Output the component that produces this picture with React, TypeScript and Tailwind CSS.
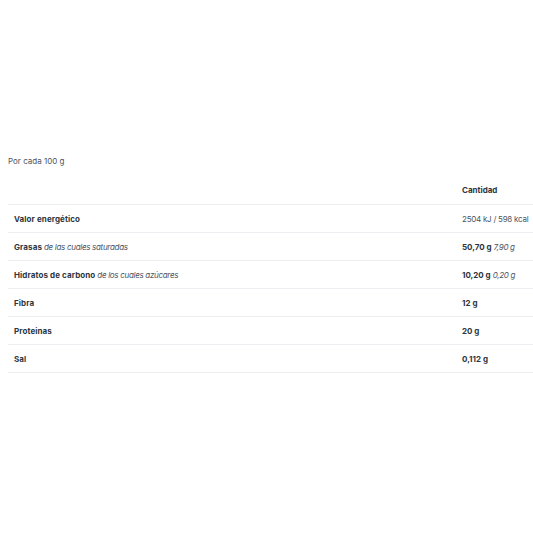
const ROWS: { name: string; sub?: string; value: string; subValue?: string; bold: boolean }[] = [
  { name: "Valor energético", value: "2504 kJ / 598 kcal", bold: false },
  { name: "Grasas", sub: "de las cuales saturadas", value: "50,70 g", subValue: "7,90 g", bold: true },
  { name: "Hidratos de carbono", sub: "de los cuales azúcares", value: "10,20 g", subValue: "0,20 g", bold: true },
  { name: "Fibra", value: "12 g", bold: true },
  { name: "Proteinas", value: "20 g", bold: true },
  { name: "Sal", value: "0,112 g", bold: true },
];

export default function App() {
  return (
    <div className="min-h-[533px] bg-white pl-2 pt-[155px] font-['Inter',sans-serif] text-[8px] text-[#2d3540]">
      <p className="h-[12px] leading-[12px] text-[#4b5563]">Por cada 100 g</p>
      <div className="mt-[8px] w-[540px]">
        <div className="flex h-[30px] items-center border-b border-[#eceef1]">
          <div className="w-[448px]" />
          <div className="px-1.5 font-bold">Cantidad</div>
        </div>
        {ROWS.map((r) => (
          <div key={r.name} className="flex h-[28px] items-center border-b border-[#eceef1]">
            <div className="w-[448px] px-1.5">
              <span className="font-bold tracking-[0.1px]">{r.name}</span>
              {r.sub && <span className="italic tracking-[-0.3px] text-[#4b5563]"> {r.sub}</span>}
            </div>
            <div className="px-1.5 whitespace-nowrap">
              <span className={r.bold ? "font-bold" : "tracking-[-0.25px] text-[#4b5563]"}>{r.value}</span>
              {r.subValue && <span className="italic tracking-[-0.3px] text-[#4b5563]"> {r.subValue}</span>}
            </div>
          </div>
        ))}
      </div>
    </div>
  );
}
